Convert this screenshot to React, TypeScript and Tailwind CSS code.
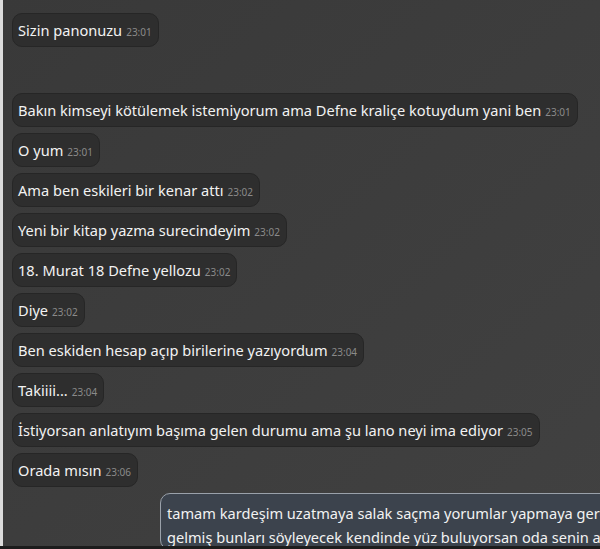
const messages = [
  { text: "Bakın kimseyi kötülemek istemiyorum ama Defne kraliçe kotuydum yani ben", time: "23:01" },
  { text: "O yum", time: "23:01" },
  { text: "Ama ben eskileri bir kenar attı", time: "23:02" },
  { text: "Yeni bir kitap yazma surecindeyim", time: "23:02" },
  { text: "18. Murat 18 Defne yellozu", time: "23:02" },
  { text: "Diye", time: "23:02" },
  { text: "Ben eskiden hesap açıp birilerine yazıyordum", time: "23:04" },
  { text: "Takiiii...", time: "23:04" },
  { text: "İstiyorsan anlatıyım başıma gelen durumu ama şu lano neyi ima ediyor", time: "23:05" },
  { text: "Orada mısın", time: "23:06" },
];

const Bubble = ({ text, time }: { text: string; time: string }) => {
  return (
    <div className="self-start shrink-0 h-[34px] flex items-baseline rounded-[10px] border border-[#262626] bg-[#2e2e2e] pl-[5px] pr-[6px] pt-[6px] leading-[20px] text-[14.6px] text-[#f2f2f2] whitespace-nowrap">
      {text}
      <span className="ml-[4px] leading-none text-[10px] text-[#8a8a8a]">{time}</span>
    </div>
  );
};

export default function App() {
  return (
    <div className="w-[600px] h-[549px] overflow-hidden flex flex-col font-['Noto_Sans',sans-serif]">
      <div className="flex flex-1 min-h-0">
        <div className="w-[3px] bg-[#dcdcdc]" />
        <main className="flex-1 flex flex-col gap-[6px] pl-[9px] pt-[13px] bg-gradient-to-br from-[#393939] to-[#414141] overflow-hidden">
          <Bubble text="Sizin panonuzu" time="23:01" />
          <div className="h-[34px] shrink-0" />
          {messages.map((m, i) => (
            <Bubble key={i} text={m.text} time={m.time} />
          ))}
          <div className="ml-[148px] w-[520px] shrink-0 rounded-[10px] border border-[#9aa1aa] bg-[#3c434d] px-[6px] pt-[7px] leading-[24px] text-[14.6px] text-[#f2f2f2] whitespace-nowrap">
            tamam kardeşim uzatmaya salak saçma yorumlar yapmaya gerek yok
            <br />
            gelmiş bunları söyleyecek kendinde yüz buluyorsan oda senin ayıbın
          </div>
        </main>
      </div>
      <div className="h-[3px] bg-[#1c1c1c]" />
    </div>
  );
}
